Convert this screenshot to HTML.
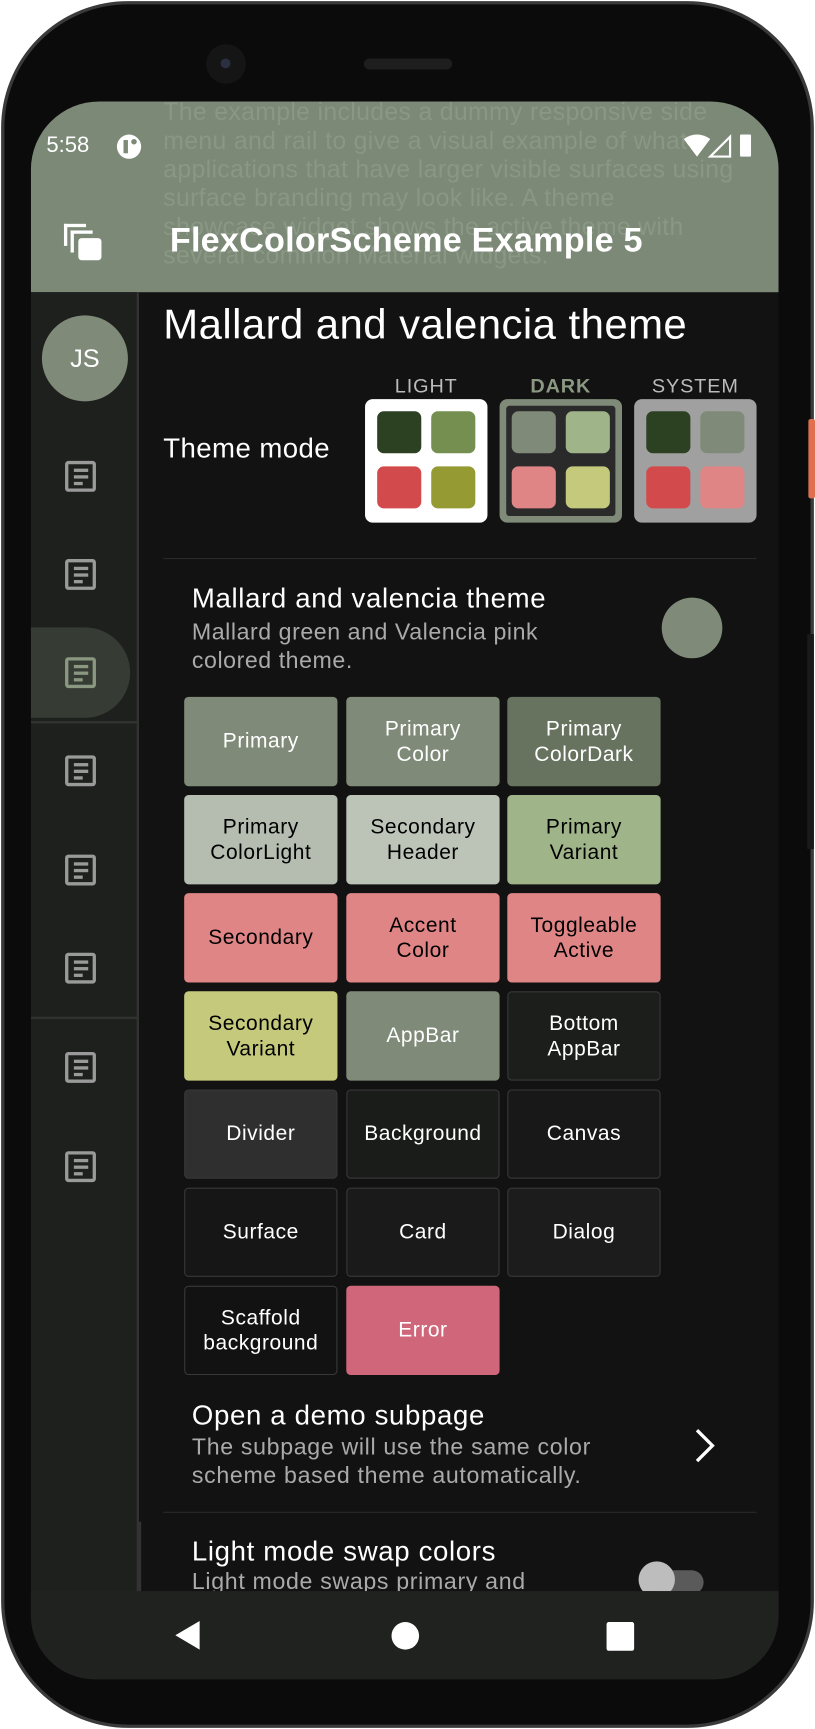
<!DOCTYPE html>
<html><head><meta charset="utf-8"><style>
*{margin:0;padding:0;box-sizing:border-box}
html,body{width:815px;height:1729px;overflow:hidden;background:#fff}
#w{width:739px;height:1568px;transform:scale(1.10284,1.10268);transform-origin:0 0;position:relative;font-family:"Liberation Sans",sans-serif}
.a{position:absolute}
.phone{left:1px;top:1px;width:737px;height:1566px;border-radius:115px;background:#0b0b0b;border:3px solid #3a3a3a}
.screen{left:28px;top:92px;width:678px;height:1431px;border-radius:62px 62px 58px 58px;overflow:hidden;background:#121212}
.cell{position:absolute;width:139px;height:81px;border-radius:4px;display:flex;align-items:center;justify-content:center;text-align:center;font-size:19px;line-height:23px;color:#fff;letter-spacing:.5px}
.ic{position:absolute;left:31px;width:28px;height:28px;border:3px solid #9a9a9a;border-radius:3px}
.ic i{position:absolute;left:5px;height:3px;background:#9a9a9a}
.sw{position:absolute;width:111px;height:112px;border-radius:7px}
.sq{position:absolute;width:40px;height:38px;border-radius:6px}
.lbl{position:absolute;top:340px;font-size:18px;color:#bbb;letter-spacing:.8px;width:111px;text-align:center}
</style></head><body><div id="w">
<div class="a phone"></div>
<div class="a" style="left:733px;top:380px;width:6px;height:72px;background:#e0704f;border-radius:2px"></div>
<div class="a" style="left:732px;top:575px;width:6px;height:195px;background:#1a1a1a"></div>
<div class="a" style="left:187px;top:40px;width:36px;height:36px;border-radius:50%;background:#151515"></div>
<div class="a" style="left:200px;top:53px;width:9px;height:9px;border-radius:50%;background:#2a3040"></div>
<div class="a" style="left:330px;top:53px;width:80px;height:10px;border-radius:5px;background:#1e1e1e"></div>
<div class="a screen">
 <div class="a" style="left:0;top:0;width:678px;height:173px;background:#7c8977"></div>
 <div class="a" style="left:120px;top:-3px;width:560px;font-size:22.5px;line-height:26px;color:#8a9785;white-space:nowrap;letter-spacing:.3px">The example includes a dummy responsive side<br>menu and rail to give a visual example of what<br>applications that have larger visible surfaces using<br>surface branding may look like. A theme<br>showcase widget shows the active theme with<br>several common Material widgets.</div>
 <div class="a" style="left:14px;top:29px;font-size:20px;color:#fff">5:58</div>
 <div class="a" style="left:78px;top:30px;width:22px;height:22px;border-radius:50%;background:#fff"></div>
 <div class="a" style="left:84px;top:35px;width:4px;height:12px;background:#7c8977"></div>
 <div class="a" style="left:91px;top:34px;width:5px;height:5px;border-radius:50%;background:#7c8977"></div>
 <svg class="a" style="left:590px;top:28px" width="70" height="24"><path d="M2 6 Q14 -2 26 6 L14 22Z" fill="#fff"/><path d="M44 4 L44 22 L26 22Z" fill="none" stroke="#fff" stroke-width="2"/><rect x="53" y="2" width="10" height="20" rx="1" fill="#fff"/></svg>
 <div class="a" style="left:30px;top:111px;width:20px;height:20px;border:3px solid #fff;border-right:none;border-bottom:none"></div>
 <div class="a" style="left:36px;top:117px;width:20px;height:20px;border:3px solid #fff;border-right:none;border-bottom:none"></div>
 <div class="a" style="left:43px;top:124px;width:21px;height:20px;background:#fff;border-radius:3px"></div>
 <div class="a" style="left:126px;top:108px;font-size:31px;font-weight:bold;color:#fff;letter-spacing:.2px">FlexColorScheme Example 5</div>
 <div class="a" style="left:0;top:173px;width:98px;height:1180px;background:#1e201e;border-right:2px solid #333"></div>
 <div class="a" style="left:10px;top:194px;width:78px;height:78px;border-radius:50%;background:#7f8b78;color:#fff;font-size:23px;display:flex;align-items:center;justify-content:center">JS</div>
 <div class="a" style="left:0;top:477px;width:90px;height:82px;border-radius:0 41px 41px 0;background:#363b33"></div>
 <div class="a" style="left:0;top:562px;width:97px;height:2px;background:#333"></div>
 <div class="a" style="left:0;top:830px;width:97px;height:2px;background:#333"></div>
 <div class="ic" style="top:326px"><i style="top:4px;width:13px"></i><i style="top:10px;width:13px"></i><i style="top:16px;width:8px"></i></div>
 <div class="ic" style="top:415px"><i style="top:4px;width:13px"></i><i style="top:10px;width:13px"></i><i style="top:16px;width:8px"></i></div>
 <div class="ic" style="top:504px;border-color:#8a9882"><i style="top:4px;width:13px;background:#8a9882"></i><i style="top:10px;width:13px;background:#8a9882"></i><i style="top:16px;width:8px;background:#8a9882"></i></div>
 <div class="ic" style="top:593px"><i style="top:4px;width:13px"></i><i style="top:10px;width:13px"></i><i style="top:16px;width:8px"></i></div>
 <div class="ic" style="top:683px"><i style="top:4px;width:13px"></i><i style="top:10px;width:13px"></i><i style="top:16px;width:8px"></i></div>
 <div class="ic" style="top:772px"><i style="top:4px;width:13px"></i><i style="top:10px;width:13px"></i><i style="top:16px;width:8px"></i></div>
 <div class="ic" style="top:862px"><i style="top:4px;width:13px"></i><i style="top:10px;width:13px"></i><i style="top:16px;width:8px"></i></div>
 <div class="ic" style="top:952px"><i style="top:4px;width:13px"></i><i style="top:10px;width:13px"></i><i style="top:16px;width:8px"></i></div>
</div>
<div class="a" style="left:148px;top:274px;font-size:38px;color:#fff;letter-spacing:.4px">Mallard and valencia theme</div>
<div class="a" style="left:148px;top:393px;font-size:25px;color:#fff;letter-spacing:.4px">Theme mode</div>
<div class="lbl" style="left:331px">LIGHT</div>
<div class="lbl" style="left:453px;color:#8a9882;font-weight:bold">DARK</div>
<div class="lbl" style="left:575px">SYSTEM</div>
<div class="sw" style="left:331px;top:362px;background:#fff"></div>
<div class="sq" style="left:342px;top:373px;background:#2c4121"></div><div class="sq" style="left:391px;top:373px;background:#748f50"></div>
<div class="sq" style="left:342px;top:423px;background:#d24a4b"></div><div class="sq" style="left:391px;top:423px;background:#959a33"></div>
<div class="sw" style="left:453px;top:362px;background:#7f8b78"></div>
<div class="a" style="left:459px;top:368px;width:99px;height:100px;background:#2a2a2a;border-radius:3px"></div>
<div class="sq" style="left:464px;top:373px;background:#7f8b78"></div><div class="sq" style="left:513px;top:373px;background:#a0b48a"></div>
<div class="sq" style="left:464px;top:423px;background:#e08585"></div><div class="sq" style="left:513px;top:423px;background:#c5c97c"></div>
<div class="sw" style="left:575px;top:362px;background:#a0a0a0"></div>
<div class="sq" style="left:586px;top:373px;background:#2c4121"></div><div class="sq" style="left:635px;top:373px;background:#7f8b78"></div>
<div class="sq" style="left:586px;top:423px;background:#d24a4b"></div><div class="sq" style="left:635px;top:423px;background:#e08585"></div>
<div class="a" style="left:148px;top:506px;width:538px;height:1px;background:#2a2a2a"></div>
<div class="a" style="left:174px;top:529px;font-size:25px;color:#fff;letter-spacing:.6px">Mallard and valencia theme</div>
<div class="a" style="left:174px;top:561px;font-size:21px;line-height:26px;color:#aaa;letter-spacing:.5px">Mallard green and Valencia pink<br>colored theme.</div>
<div class="a" style="left:600px;top:542px;width:55px;height:55px;border-radius:50%;background:#7f8b78"></div>

<div class="cell" style="left:167px;top:632px;background:#7f8b78">Primary</div>
<div class="cell" style="left:314px;top:632px;background:#7f8b78">Primary<br>Color</div>
<div class="cell" style="left:460px;top:632px;background:#67735f">Primary<br>ColorDark</div>
<div class="cell" style="left:167px;top:721px;background:#b5bdb1;color:#000">Primary<br>ColorLight</div>
<div class="cell" style="left:314px;top:721px;background:#bcc4b8;color:#000">Secondary<br>Header</div>
<div class="cell" style="left:460px;top:721px;background:#a0b48a;color:#000">Primary<br>Variant</div>
<div class="cell" style="left:167px;top:810px;background:#e08585;color:#000">Secondary</div>
<div class="cell" style="left:314px;top:810px;background:#e08585;color:#000">Accent<br>Color</div>
<div class="cell" style="left:460px;top:810px;background:#e08585;color:#000">Toggleable<br>Active</div>
<div class="cell" style="left:167px;top:899px;background:#c5c97c;color:#000">Secondary<br>Variant</div>
<div class="cell" style="left:314px;top:899px;background:#7f8b78">AppBar</div>
<div class="cell" style="left:460px;top:899px;background:#1c1e1c;border:1px solid #383838">Bottom<br>AppBar</div>
<div class="cell" style="left:167px;top:988px;background:#2f2f2f;border:1px solid #383838">Divider</div>
<div class="cell" style="left:314px;top:988px;background:#1a1c1a;border:1px solid #383838">Background</div>
<div class="cell" style="left:460px;top:988px;background:#171817;border:1px solid #383838">Canvas</div>
<div class="cell" style="left:167px;top:1077px;background:#161616;border:1px solid #383838">Surface</div>
<div class="cell" style="left:314px;top:1077px;background:#1a1a1a;border:1px solid #383838">Card</div>
<div class="cell" style="left:460px;top:1077px;background:#1c1c1c;border:1px solid #383838">Dialog</div>
<div class="cell" style="left:167px;top:1166px;background:#121212;border:1px solid #383838">Scaffold<br>background</div>
<div class="cell" style="left:314px;top:1166px;background:#cf6679">Error</div>

<div class="a" style="left:174px;top:1270px;font-size:25px;color:#fff;letter-spacing:.6px">Open a demo subpage</div>
<div class="a" style="left:174px;top:1300px;font-size:21px;line-height:26px;color:#aaa;letter-spacing:.6px">The subpage will use the same color<br>scheme based theme automatically.</div>
<svg class="a" style="left:628px;top:1294px" width="24" height="34"><path d="M4 3 L18 17 L4 31" fill="none" stroke="#fff" stroke-width="3"/></svg>
<div class="a" style="left:148px;top:1371px;width:538px;height:1px;background:#2a2a2a"></div>
<div class="a" style="left:28px;top:1380px;width:678px;height:63px;overflow:hidden">
 <div class="a" style="left:146px;top:13px;font-size:25px;color:#fff;white-space:nowrap;letter-spacing:.6px">Light mode swap colors</div>
 <div class="a" style="left:146px;top:43px;font-size:21px;color:#aaa;white-space:nowrap;letter-spacing:.6px">Light mode swaps primary and</div>
 <div class="a" style="left:560px;top:44px;width:50px;height:22px;border-radius:11px;background:#5a5a5a"></div>
 <div class="a" style="left:551px;top:36px;width:33px;height:33px;border-radius:50%;background:#bdbdbd"></div>
</div>
<div class="a" style="left:126px;top:1380px;width:2px;height:63px;background:#333"></div>
<div class="a" style="left:28px;top:1443px;width:678px;height:80px;background:#202220;border-radius:0 0 58px 58px"></div>
<svg class="a" style="left:155px;top:1468px" width="30" height="30"><path d="M26 2 L26 28 L4 15Z" fill="#fff"/></svg>
<div class="a" style="left:355px;top:1471px;width:25px;height:25px;border-radius:50%;background:#fff"></div>
<div class="a" style="left:550px;top:1471px;width:25px;height:26px;border-radius:2px;background:#fff"></div>
</div></body></html>
